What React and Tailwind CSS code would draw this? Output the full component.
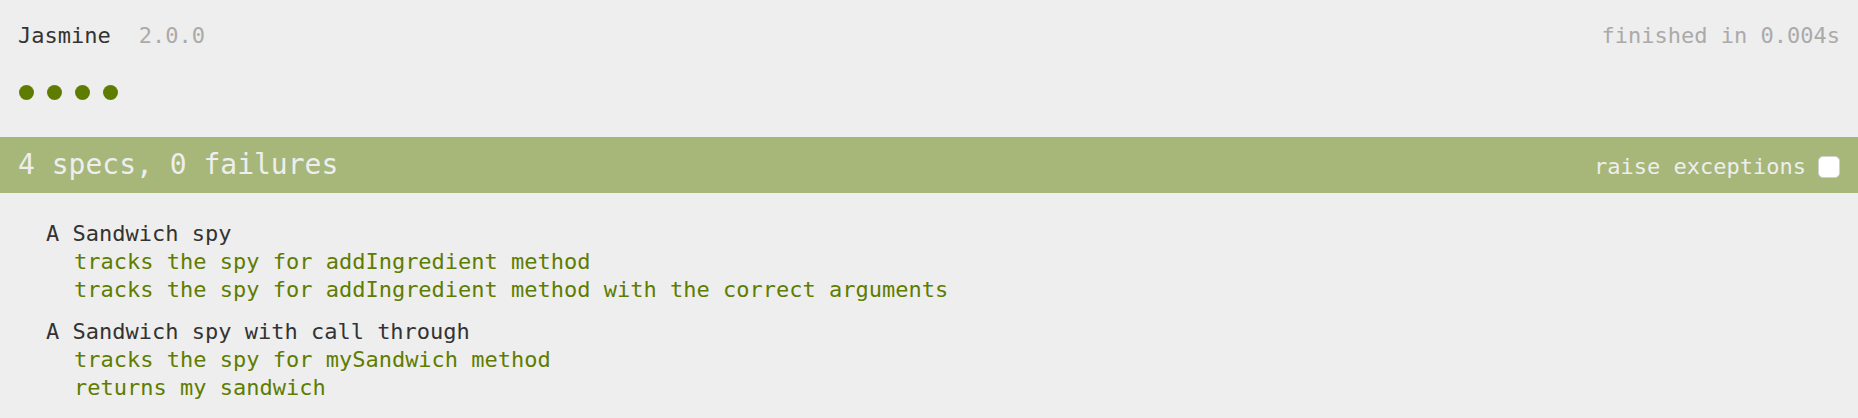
export default function App() {
  const suites = [
    {
      title: "A Sandwich spy",
      specs: [
        "tracks the spy for addIngredient method",
        "tracks the spy for addIngredient method with the correct arguments",
      ],
    },
    {
      title: "A Sandwich spy with call through",
      specs: ["tracks the spy for mySandwich method", "returns my sandwich"],
    },
  ];
  return (
    <div
      className="w-full h-[418px] bg-[#eeeeee] text-[#333333] overflow-hidden"
      style={{ fontFamily: '"DejaVu Sans Mono", "Liberation Mono", monospace' }}
    >
      <div className="flex justify-between px-[18px] pt-[22px] text-[22px] leading-[28px]">
        <div>
          <span>Jasmine</span>
          <span className="ml-[28px] text-[#aaaaaa]">2.0.0</span>
        </div>
        <span className="text-[#aaaaaa]">finished in 0.004s</span>
      </div>
      <div className="flex gap-[13px] px-[19px] mt-[35px]">
        {[0, 1, 2, 3].map((i) => (
          <span key={i} className="block w-[15px] h-[15px] rounded-full bg-[#5e7d00]" />
        ))}
      </div>
      <div className="mt-[37px] h-[56px] bg-[#a6b779] text-[#eeeeee] flex justify-between items-baseline px-[18px]">
        <span className="text-[28px] leading-[56px]">4 specs, 0 failures</span>
        <span className="flex items-center gap-[12px] text-[22px] leading-[28px]">
          <span>raise exceptions</span>
          <span className="block w-[22px] h-[22px] rounded-[5px] bg-white border border-[#d0d0d0]" />
        </span>
      </div>
      <div className="pt-[27px] pl-[46px] text-[22px] leading-[28px]">
        {suites.map((s, i) => (
          <div key={i} className={i > 0 ? "mt-[14px]" : ""}>
            <div className="text-[#333333]">{s.title}</div>
            <div className="pl-[28px]">
              {s.specs.map((sp) => (
                <div key={sp} className="text-[#5e7d00]">
                  {sp}
                </div>
              ))}
            </div>
          </div>
        ))}
      </div>
    </div>
  );
}
